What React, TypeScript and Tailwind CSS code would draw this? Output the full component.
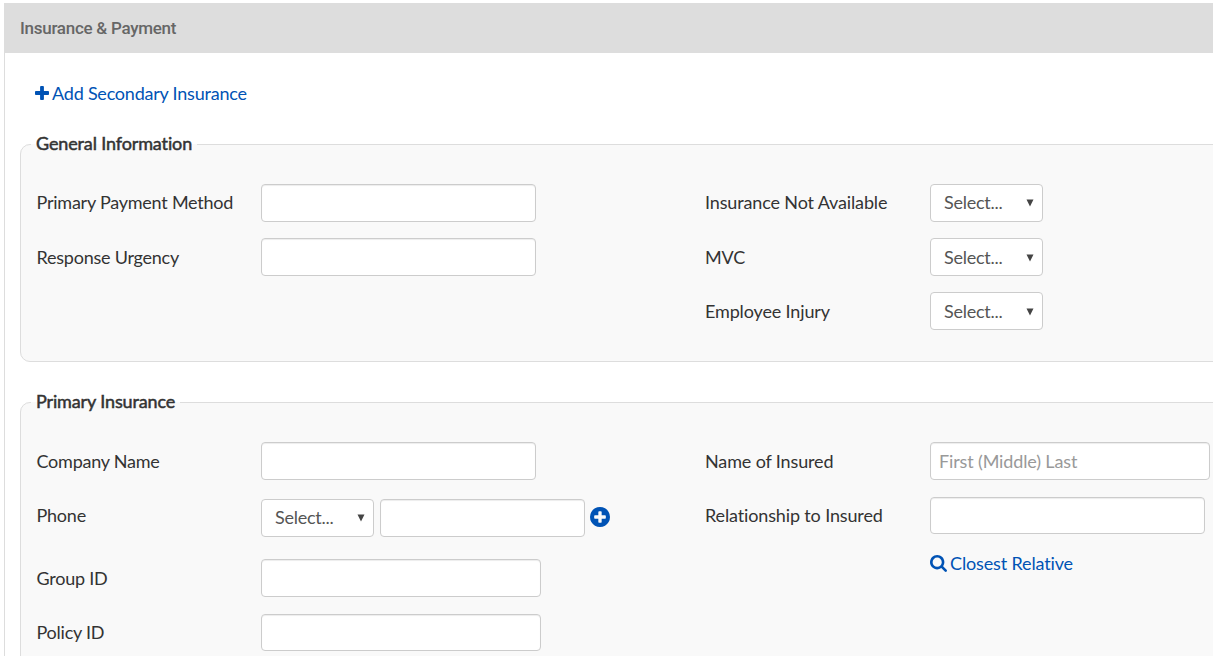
import type { ReactNode } from "react";

const PlusIcon = () => (
  <svg width="14" height="14" viewBox="192 128 1408 1408" fill="currentColor">
    <path d="M1600 736v192q0 40-28 68t-68 28h-416v416q0 40-28 68t-68 28h-192q-40 0-68-28t-28-68v-416h-416q-40 0-68-28t-28-68v-192q0-40 28-68t68-28h416v-416q0-40 28-68t68-28h192q40 0 68 28t28 68v416h416q40 0 68 28t28 68z" />
  </svg>
);

const PlusCircleIcon = () => (
  <svg
    width="20"
    height="20"
    viewBox="128 128 1536 1536"
    fill="currentColor"
    className="-mt-[2px] -ml-[1px] text-[#0053b5]"
  >
    <path d="M1344 960v-128q0-26-19-45t-45-19h-256v-256q0-26-19-45t-45-19h-128q-26 0-45 19t-19 45v256h-256q-26 0-45 19t-19 45v128q0 26 19 45t45 19h256v256q0 26 19 45t45 19h128q26 0 45-19t19-45v-256h256q26 0 45-19t19-45zm320-64q0 209-103 385.5t-279.5 279.5-385.5 103-385.5-103-279.5-279.5-103-385.5 103-385.5 279.5-279.5 385.5-103 385.5 103 279.5 279.5 103 385.5z" />
  </svg>
);

const SearchIcon = () => (
  <svg width="17" height="17" viewBox="64 128 1664 1664" fill="currentColor">
    <path d="M1216 832q0-185-131.5-316.5t-316.5-131.5-316.5 131.5-131.5 316.5 131.5 316.5 316.5 131.5 316.5-131.5 131.5-316.5zm512 832q0 52-38 90t-90 38q-54 0-90-38l-343-342q-179 124-399 124-143 0-273.5-55.5t-225-150-150-225-55.5-273.5 55.5-273.5 150-225 225-150 273.5-55.5 273.5 55.5 225 150 150 225 55.5 273.5q0 220-124 399l343 343q37 37 37 90z" />
  </svg>
);

const inputStyle =
  "block rounded-[4px] border border-[#ccc] bg-white shadow-[inset_0_1px_1px_rgba(0,0,0,0.075)] px-2 outline-none placeholder:text-[#999] placeholder:opacity-100";

const Input = ({
  className = "h-[38px] w-[275px]",
  placeholder,
}: {
  className?: string;
  placeholder?: string;
}) => (
  <input
    type="text"
    placeholder={placeholder}
    className={inputStyle + " " + className}
  />
);

const Select = ({ className = "pb-0" }: { className?: string }) => (
  <button
    type="button"
    className={
      "flex h-[38px] w-[113px] items-center justify-between rounded-[4px] border border-[#ccc] bg-white pr-[8px] pl-[13px] tracking-[-0.25px] text-[#555] " +
      className
    }
  >
    <span>Select...</span>
    <svg width="8" height="8" viewBox="0 0 8 8" fill="#444" className="mt-px">
      <path d="M0.5 0.5h7L4 7.5z" />
    </svg>
  </button>
);

const Field = ({
  label,
  className = "h-[38px]",
  labelClass = "pt-[6px]",
  children,
}: {
  label: string;
  className?: string;
  labelClass?: string;
  children: ReactNode;
}) => (
  <div className={"flex " + className}>
    <label className={"w-[225px] shrink-0 " + labelClass}>{label}</label>
    <div className="flex shrink-0">{children}</div>
  </div>
);

const Section = ({
  title,
  className,
  children,
}: {
  title: string;
  className: string;
  children: ReactNode;
}) => (
  <fieldset
    className={
      "ml-[15px] w-[1300px] rounded-[10px] border border-[#ddd] bg-[#f9f9f9] px-[10px] " +
      className
    }
  >
    <legend className="h-6 px-[5px] leading-[22px] tracking-[-0.13px] whitespace-nowrap [-webkit-text-stroke:0.5px_#333]">
      {title}
    </legend>
    <div className="flex pt-7 pl-[5px]">{children}</div>
  </fieldset>
);

export default function App() {
  return (
    <div className="h-[656px] w-full overflow-hidden bg-white pt-[3px] pl-1 font-['Lato',sans-serif] text-[18px] leading-[26px] tracking-[-0.14px] text-[#333]">
      <header className="flex h-[50px] items-center bg-[#ddd] pl-4 font-['Roboto',sans-serif] text-[17px] font-medium tracking-[-0.27px] text-[#666]">
        Insurance &amp; Payment
      </header>
      <main className="h-[620px] border-l border-[#ddd]">
        <a className="flex h-[79px] items-center gap-[3px] pl-[30px] tracking-[-0.22px] text-[#0053b5]">
          <PlusIcon />
          <span>Add Secondary Insurance</span>
        </a>

        <Section title="General Information" className="h-[230px]">
          <div className="flex w-[669px] shrink-0 flex-col gap-4 tracking-[-0.23px]">
            <Field
              label="Primary Payment Method"
              labelClass="pt-[5px] pl-[0.5px]"
            >
              <Input />
            </Field>
            <Field label="Response Urgency" labelClass="pt-[6px] pl-[0.5px]">
              <Input />
            </Field>
          </div>
          <div className="flex flex-col gap-4">
            <Field label="Insurance Not Available" labelClass="pt-[5px]">
              <Select className="pb-[2px]" />
            </Field>
            <Field label="MVC">
              <Select />
            </Field>
            <Field label="Employee Injury">
              <Select />
            </Field>
          </div>
        </Section>

        <Section title="Primary Insurance" className="mt-7 h-[330px]">
          <div className="flex w-[669px] shrink-0 flex-col tracking-[-0.23px]">
            <Field
              label="Company Name"
              className="mb-[17px] h-[38px]"
              labelClass="pt-[6px] pl-[0.5px]"
            >
              <Input />
            </Field>
            <Field
              label="Phone"
              className="mb-[22px] h-10"
              labelClass="pt-[5px] pl-[0.5px]"
            >
              <div className="flex items-center gap-[6px] pt-[2px]">
                <Select className="pb-[2px]" />
                <Input className="h-[38px] w-[205px]" />
                <PlusCircleIcon />
              </div>
            </Field>
            <Field
              label="Group ID"
              className="mb-[17px] h-[38px]"
              labelClass="pt-[6px] pl-[0.5px]"
            >
              <Input className="h-[38px] w-[280px]" />
            </Field>
            <Field label="Policy ID" labelClass="pt-[5px] pl-[0.5px]">
              <Input className="h-[37px] w-[280px]" />
            </Field>
          </div>
          <div className="flex flex-col">
            <Field label="Name of Insured" className="mb-[17px] h-[38px]">
              <Input
                className="h-[38px] w-[280px]"
                placeholder="First (Middle) Last"
              />
            </Field>
            <Field label="Relationship to Insured" labelClass="pt-[5px]">
              <Input className="h-[37px] w-[275px]" />
            </Field>
            <a className="mt-[15px] ml-[225px] flex items-center gap-[3px] text-[#0053b5]">
              <SearchIcon />
              <span>Closest Relative</span>
            </a>
          </div>
        </Section>
      </main>
    </div>
  );
}
